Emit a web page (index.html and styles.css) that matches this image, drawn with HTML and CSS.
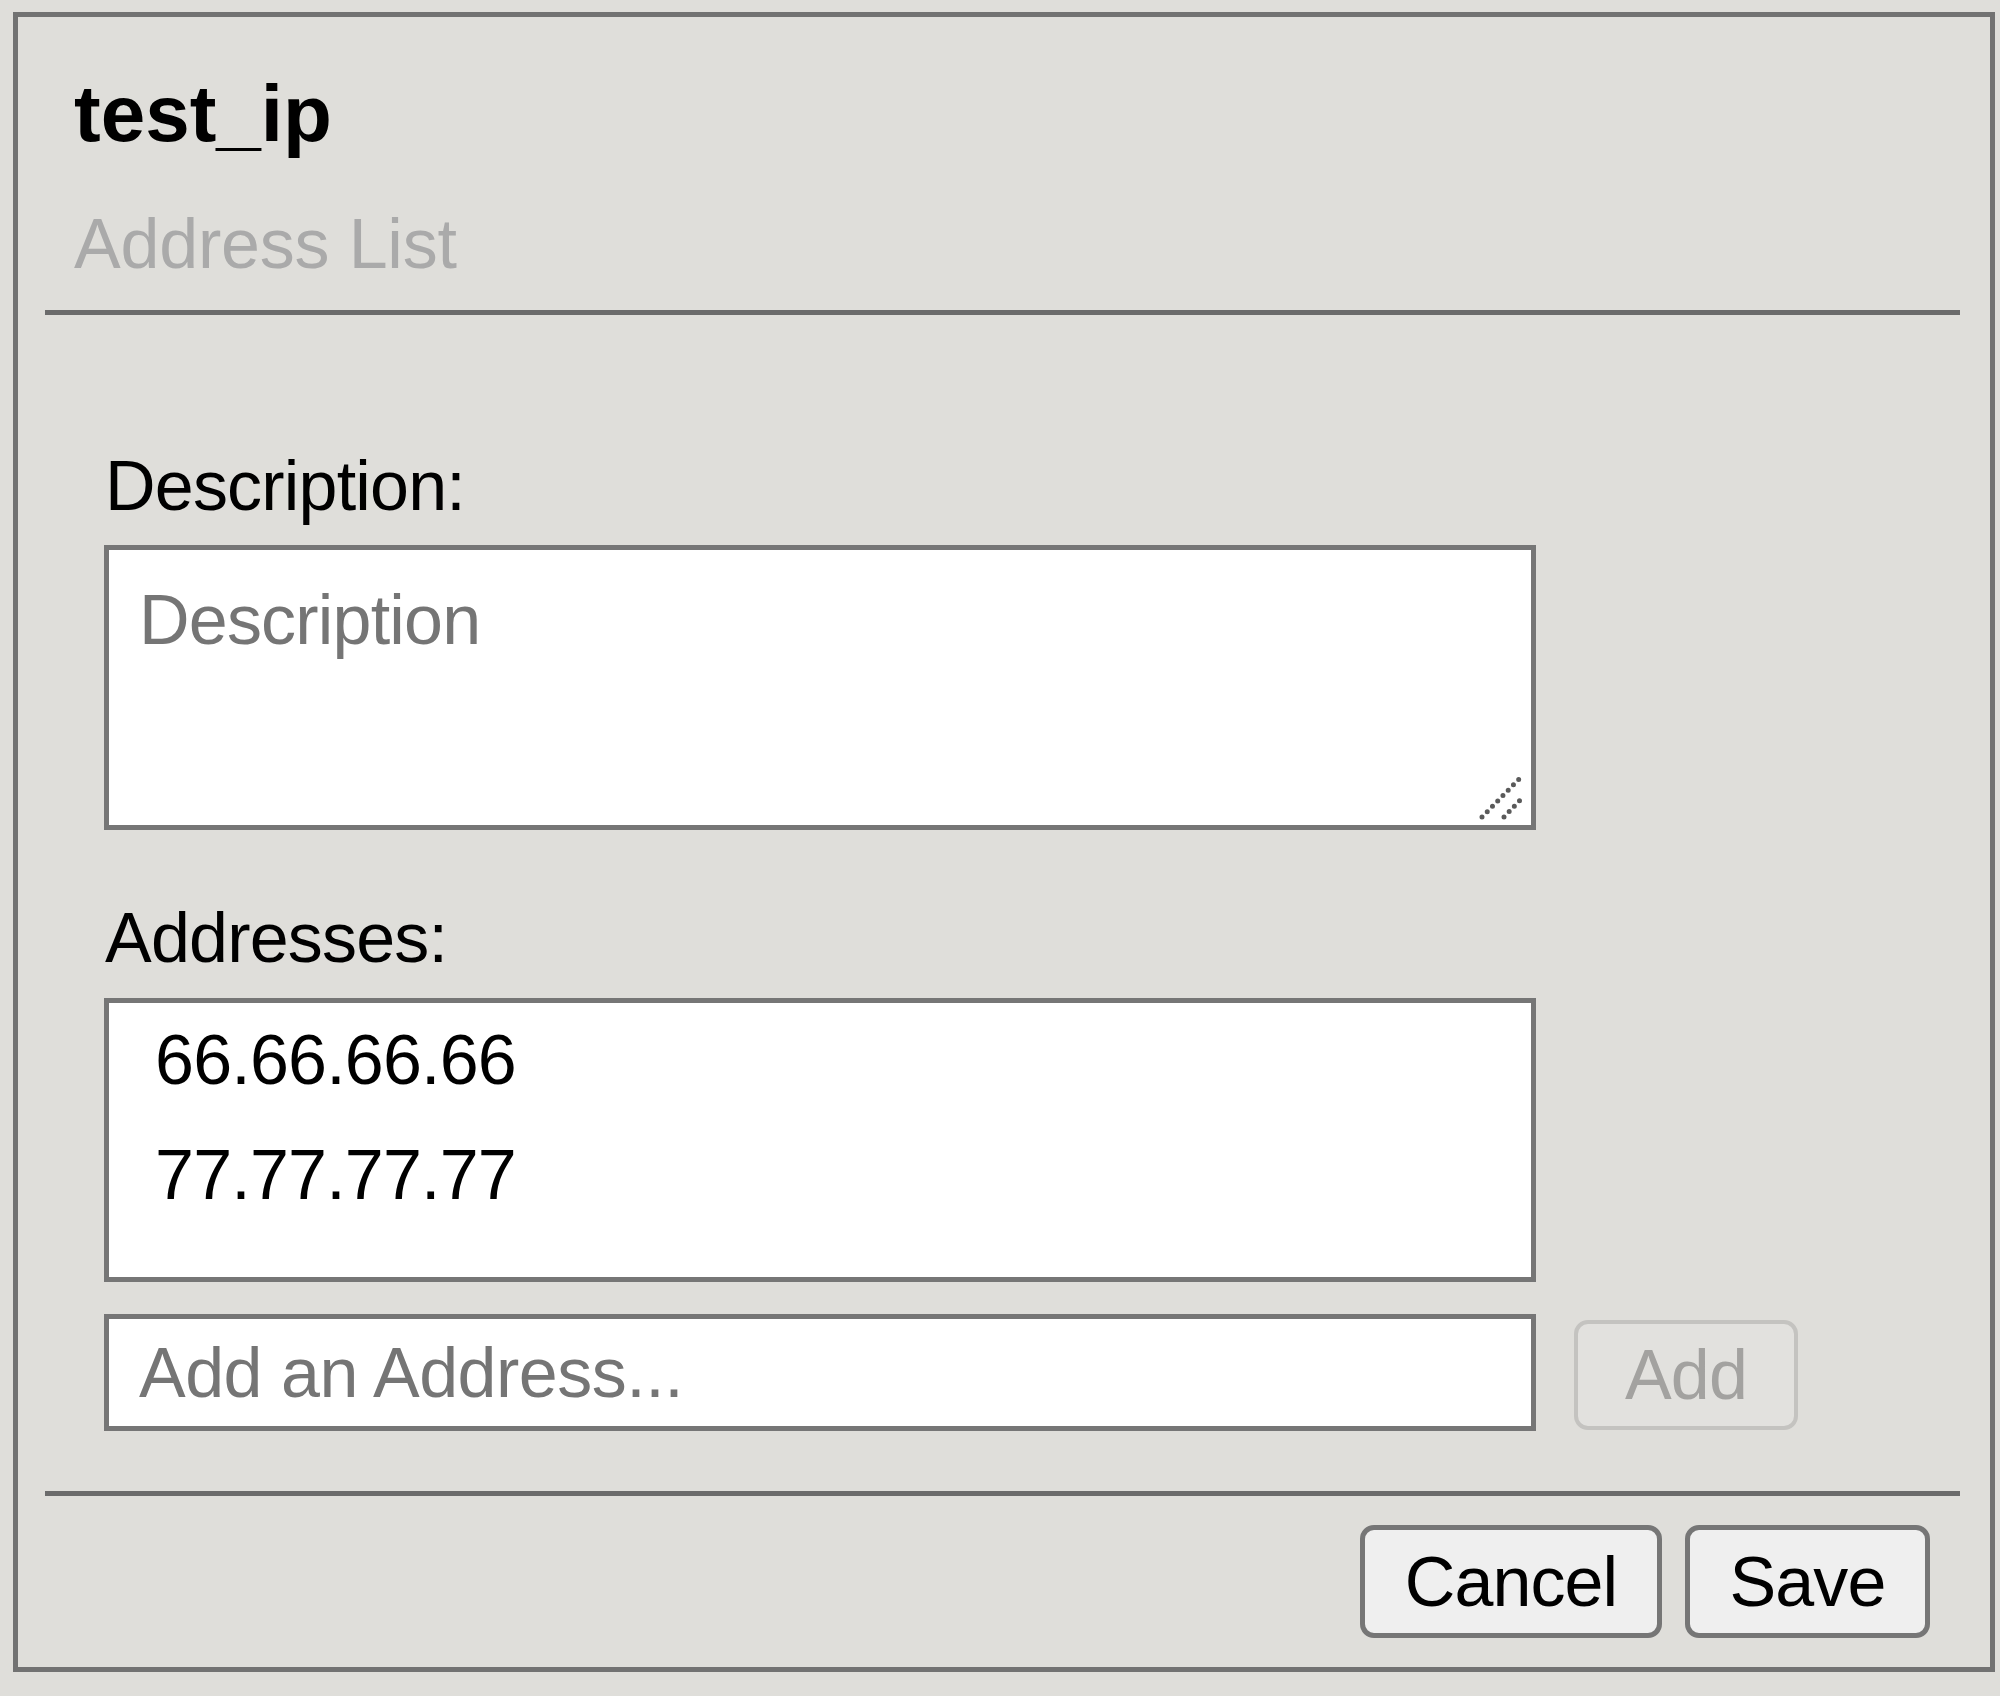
FILE: index.html
```html
<!DOCTYPE html>
<html lang="en">
<head>
<meta charset="utf-8">
<title>test_ip</title>
<link rel="stylesheet" href="styles.css">
</head>
<body>
<div class="dialog">
  <header class="dlg-head">
    <h1 class="title">test_ip</h1>
    <div class="subtitle">Address List</div>
  </header>
  <div class="dlg-body">
    <label class="field-label">Description:</label>
    <div class="ta-wrap">
      <textarea class="desc" placeholder="Description"></textarea>
      <svg class="grip" width="60" height="60" viewBox="0 0 60 60">
        <line x1="11" y1="52" x2="52" y2="10" />
        <line x1="33" y1="52" x2="52" y2="32" />
      </svg>
    </div>
    <label class="field-label addr-label">Addresses:</label>
    <ul class="addr-list">
      <li>66.66.66.66</li>
      <li>77.77.77.77</li>
    </ul>
    <div class="add-row">
      <input class="addr-input" type="text" placeholder="Add an Address...">
      <button class="btn btn-add" disabled>Add</button>
    </div>
  </div>
  <footer class="dlg-foot">
    <button class="btn btn-cancel">Cancel</button>
    <button class="btn btn-save">Save</button>
  </footer>
</div>
</body>
</html>
```

FILE: styles.css
```css
html, body {
  margin: 0;
  padding: 0;
  background: #dfdeda;
}

body {
  font-family: "Liberation Sans", Arial, sans-serif;
  color: #000;
  padding: 12px 0 0 13px;
}

.dialog {
  width: 1982px;
  height: 1660px;
  box-sizing: border-box;
  border: 5px solid #727272;
  background: #dfdeda;
  display: flex;
  flex-direction: column;
}

.dlg-head {
  margin: 0 30px 0 27px;
  padding: 0 0 31px 29px;
  border-bottom: 5px solid #6b6b6b;
}

.title {
  margin: 0;
  padding-top: 57px;
  font-size: 80px;
  line-height: 80px;
  font-weight: bold;
  color: #000;
}

.subtitle {
  margin-top: 55px;
  font-size: 70px;
  line-height: 70px;
  color: #aaaaaa;
  letter-spacing: -0.2px;
}

.dlg-body {
  padding: 136px 0 0 86px;
}

.field-label {
  display: block;
  font-size: 70px;
  line-height: 70px;
  letter-spacing: -0.8px;
  margin-left: 1px;
}

.addr-label {
  margin-top: 73px;
}

.ta-wrap {
  position: relative;
  width: 1432px;
  margin-top: 24px;
}

.desc {
  display: block;
  width: 1432px;
  height: 285px;
  box-sizing: border-box;
  margin: 0;
  border: 5px solid #767676;
  border-radius: 0;
  padding: 30px 30px;
  font-family: "Liberation Sans", Arial, sans-serif;
  font-size: 70px;
  line-height: 80px;
  letter-spacing: -0.8px;
  background: #fff;
  color: #000;
  resize: none;
  outline: none;
}

.desc::placeholder,
.addr-input::placeholder {
  color: #757575;
  opacity: 1;
}

.grip {
  position: absolute;
  right: 5px;
  bottom: 5px;
}

.grip line {
  stroke: #5a5a5a;
  stroke-width: 5;
  stroke-linecap: round;
  stroke-dasharray: 0 7.5;
}

.addr-list {
  list-style: none;
  margin: 25px 0 0 0;
  padding: 0 0 0 46px;
  width: 1432px;
  height: 284px;
  box-sizing: border-box;
  border: 5px solid #767676;
  background: #fff;
  font-size: 70px;
  letter-spacing: -0.8px;
}

.addr-list li {
  line-height: 115px;
  height: 115px;
}

.add-row {
  display: flex;
  align-items: flex-start;
  gap: 38px;
  margin-top: 32px;
}

.addr-input {
  width: 1432px;
  height: 117px;
  box-sizing: border-box;
  margin: 0;
  border: 5px solid #767676;
  border-radius: 0;
  padding: 0 30px;
  font-family: "Liberation Sans", Arial, sans-serif;
  font-size: 70px;
  line-height: 80px;
  letter-spacing: -0.5px;
  background: #fff;
  color: #000;
  outline: none;
}

.btn {
  box-sizing: border-box;
  height: 113px;
  margin: 0;
  padding: 0;
  border: 5px solid #767676;
  border-radius: 14px;
  background: #efefef;
  font-family: "Liberation Sans", Arial, sans-serif;
  font-size: 70px;
  line-height: 70px;
  letter-spacing: -0.9px;
  color: #000;
  text-align: center;
}

.btn-add {
  width: 224px;
  height: 110px;
  margin-top: 6px;
  border-width: 4px;
  border-color: #c4c3c0;
  background: #e2e1de;
  color: #a3a2a0;
  letter-spacing: -0.8px;
}

.dlg-foot {
  margin: 60px 30px 0 27px;
  padding: 29px 30px 0 0;
  border-top: 5px solid #6b6b6b;
  display: flex;
  justify-content: flex-end;
  gap: 23px;
}

.btn-cancel {
  width: 302px;
}

.btn-save {
  width: 245px;
}
```
